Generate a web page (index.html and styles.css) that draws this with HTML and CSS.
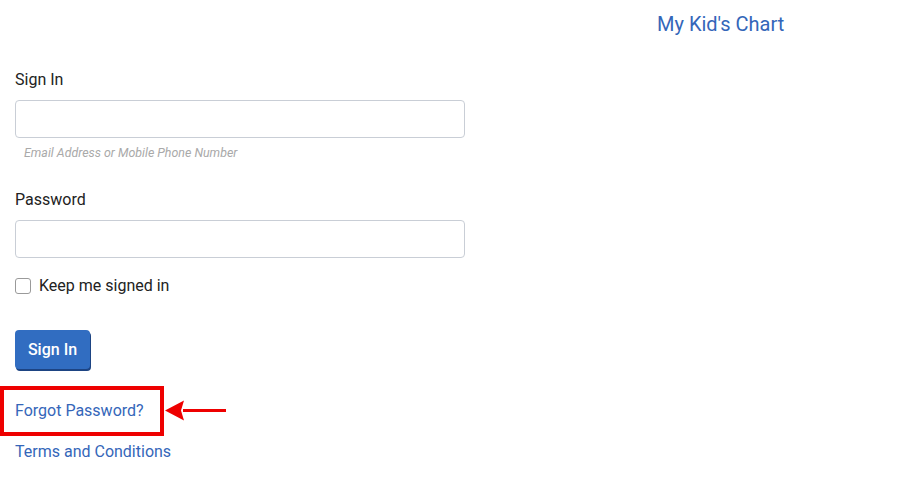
FILE: index.html
```html
<!DOCTYPE html>
<html>
<head>
<meta charset="utf-8">
<link rel="stylesheet" href="styles.css">
</head>
<body>
<header class="top">
  <a class="brand" href="#">My Kid's Chart</a>
</header>
<main class="form">
  <label class="label" for="user">Sign In</label>
  <input class="field" id="user" type="text">
  <div class="hint">Email Address or Mobile Phone Number</div>

  <label class="label label-pw" for="pw">Password</label>
  <input class="field" id="pw" type="password">

  <label class="check-row">
    <span class="checkbox"></span>
    <span>Keep me signed in</span>
  </label>

  <button class="btn" type="button">Sign In</button>

  <div class="links">
    <a class="link" href="#">Forgot Password?</a>
    <a class="link" href="#">Terms and Conditions</a>
  </div>
</main>
<div class="highlight"></div>
<svg class="arrow" width="70" height="24" viewBox="0 0 70 24">
  <rect x="18" y="10" width="43" height="3" fill="#ee0000"/>
  <polygon points="0,11.5 19,1.5 16,11.5 19,21.5" fill="#ee0000"/>
</svg>
</body>
</html>
```

FILE: styles.css
```css
* { box-sizing: border-box; }
html, body { margin: 0; padding: 0; background: #fff; }
body {
  font-family: Roboto, "Liberation Sans", Arial, sans-serif;
  color: #222;
  font-size: 16px;
  line-height: 22px;
  position: relative;
  width: 899px;
  height: 488px;
  overflow: hidden;
}
.top {
  padding: 12px 0 0 657px;
  height: 69px;
}
.brand {
  font-size: 20px;
  line-height: 24px;
  color: #3466b9;
  text-decoration: none;
}
.form {
  padding-left: 15px;
  width: 465px;
  display: flex;
  flex-direction: column;
  align-items: flex-start;
}
.label { display: block; }
.label-pw { margin-top: 27px; }
.field {
  display: block;
  margin-top: 9px;
  width: 450px;
  height: 38px;
  border: 1px solid #c9ced6;
  border-radius: 4px;
  font: inherit;
  padding: 6px 10px;
  outline: none;
}
.hint {
  margin: 6px 0 0 9px;
  font-size: 12.4px;
  line-height: 18px;
  font-style: italic;
  color: #a9a9a9;
}
.check-row {
  margin-top: 17px;
  display: flex;
  align-items: center;
  gap: 8px;
}
.checkbox {
  width: 16px;
  height: 16px;
  border: 1px solid #9a9a9a;
  border-radius: 3px;
  background: #fff;
}
.btn {
  margin-top: 33px;
  width: 75px;
  height: 39px;
  background: #316dc1;
  color: #fff;
  border: none;
  border-radius: 4px;
  box-shadow: 1px 2px 0 #1d4483;
  font-family: inherit;
  font-size: 16px;
  font-weight: 500;
  padding: 0;
}
.links {
  margin-top: 31px;
  display: flex;
  flex-direction: column;
  gap: 19px;
}
.link {
  color: #3466b9;
  text-decoration: none;
}
.highlight {
  position: absolute;
  left: 0;
  top: 386px;
  width: 164px;
  height: 50px;
  border: 4px solid #ee0000;
}
.arrow {
  position: absolute;
  left: 165px;
  top: 399px;
}
```
